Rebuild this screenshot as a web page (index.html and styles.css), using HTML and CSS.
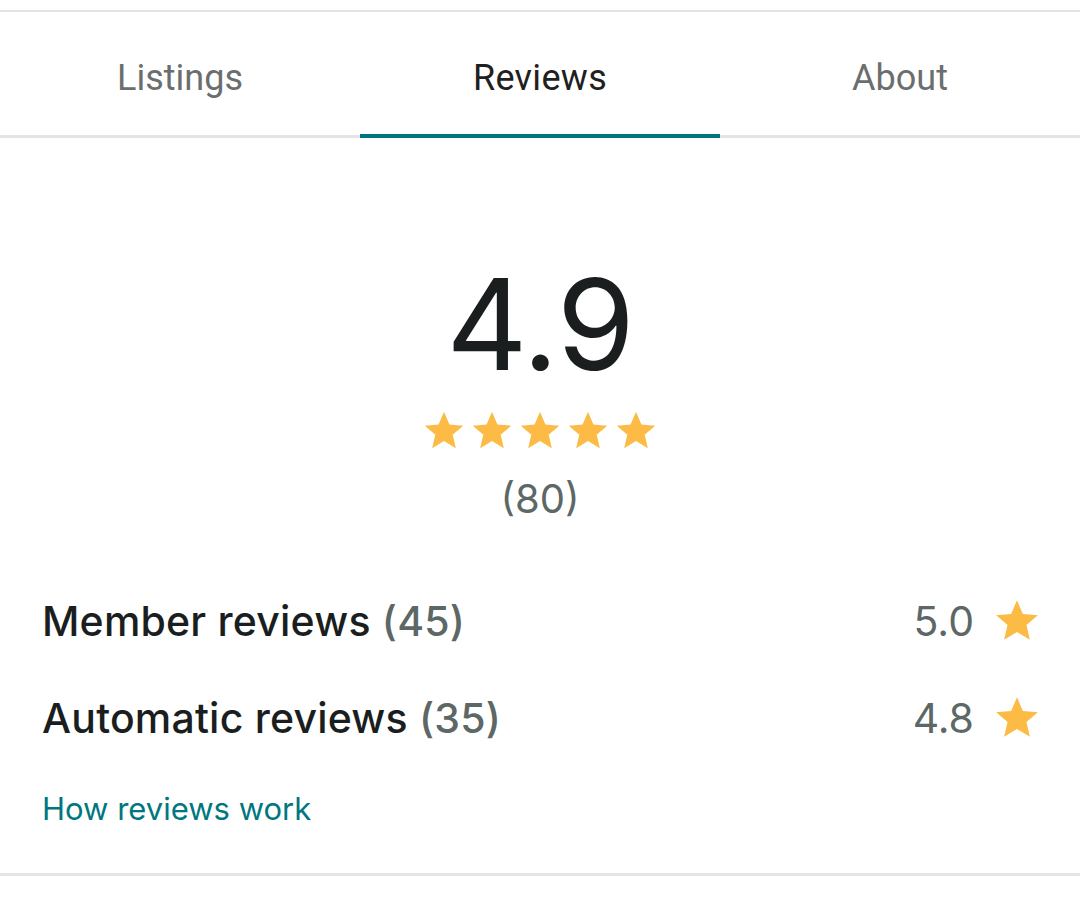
FILE: index.html
```html
<!DOCTYPE html>
<html lang="en">
<head>
  <meta charset="UTF-8" />
  <meta name="viewport" content="width=device-width, initial-scale=1.0" />
  <title>Reviews</title>
  <link rel="stylesheet" href="styles.css">
</head>
<body>
  <div class="page">
    <nav class="tabs">
      <div class="tab">Listings</div>
      <div class="tab active">Reviews</div>
      <div class="tab">About</div>
    </nav>

    <div class="summary">
      <div class="score">4.9</div>
      <div class="stars">
        <svg class="star" viewBox="0 0 24 24"><path d="M12 17.27L18.18 21l-1.64-7.03L22 9.24l-7.19-.61L12 2 9.19 8.63 2 9.24l5.46 4.73L5.82 21z"/></svg>
        <svg class="star" viewBox="0 0 24 24"><path d="M12 17.27L18.18 21l-1.64-7.03L22 9.24l-7.19-.61L12 2 9.19 8.63 2 9.24l5.46 4.73L5.82 21z"/></svg>
        <svg class="star" viewBox="0 0 24 24"><path d="M12 17.27L18.18 21l-1.64-7.03L22 9.24l-7.19-.61L12 2 9.19 8.63 2 9.24l5.46 4.73L5.82 21z"/></svg>
        <svg class="star" viewBox="0 0 24 24"><path d="M12 17.27L18.18 21l-1.64-7.03L22 9.24l-7.19-.61L12 2 9.19 8.63 2 9.24l5.46 4.73L5.82 21z"/></svg>
        <svg class="star" viewBox="0 0 24 24"><path d="M12 17.27L18.18 21l-1.64-7.03L22 9.24l-7.19-.61L12 2 9.19 8.63 2 9.24l5.46 4.73L5.82 21z"/></svg>
      </div>
      <div class="count">(80)</div>
    </div>

    <div class="breakdown">
      <div class="row">
        <span class="label">Member reviews <span class="muted">(45)</span></span>
        <span class="value">5.0
          <svg class="star-sm" viewBox="0 0 24 24"><path d="M12 17.27L18.18 21l-1.64-7.03L22 9.24l-7.19-.61L12 2 9.19 8.63 2 9.24l5.46 4.73L5.82 21z"/></svg>
        </span>
      </div>
      <div class="row">
        <span class="label">Automatic reviews <span class="muted">(35)</span></span>
        <span class="value">4.8
          <svg class="star-sm" viewBox="0 0 24 24"><path d="M12 17.27L18.18 21l-1.64-7.03L22 9.24l-7.19-.61L12 2 9.19 8.63 2 9.24l5.46 4.73L5.82 21z"/></svg>
        </span>
      </div>
      <a class="how" href="#">How reviews work</a>
    </div>
  </div>
</body>
</html>
```

FILE: styles.css
```css
body {
  margin: 0;
  background: #fff;
  font-family: Inter, "Noto Sans", sans-serif;
  color: #1b1e1e;
}
.page {
  padding-top: 10px;
}
.tabs {
  display: flex;
  border-top: 2px solid #e4e4e4;
}
.tab {
  flex: 1;
  box-sizing: border-box;
  height: 126px;
  padding-top: 8px;
  display: flex;
  align-items: center;
  justify-content: center;
  font-family: Roboto, "Liberation Sans", sans-serif;
  font-size: 36px;
  color: #6b6e6e;
  border-bottom: 3px solid #e4e4e4;
}
.tab.active {
  color: #1f2121;
  border-bottom: 4px solid #00737b;
  padding-top: 10px;
  letter-spacing: 0.3px;
}
.summary {
  display: flex;
  flex-direction: column;
  align-items: center;
  padding-top: 122px;
}
.score {
  font-size: 126px;
  line-height: 128px;
  letter-spacing: -1px;
  color: #1b1e1e;
}
.stars {
  display: flex;
  gap: 2px;
  margin-top: 20px;
}
.star {
  width: 46px;
  height: 46px;
  fill: #fbbb44;
}
.count {
  margin-top: 20px;
  font-size: 40px;
  color: #5d6766;
}
.breakdown {
  padding: 73px 38px 46px 42px;
  border-bottom: 3px solid #e4e4e4;
}
.row {
  display: flex;
  align-items: center;
  justify-content: space-between;
  margin-bottom: 47px;
}
.label {
  font-size: 41px;
  font-weight: 500;
  letter-spacing: 0.2px;
}
.muted {
  color: #5d6766;
}
.value {
  display: flex;
  align-items: center;
  gap: 18px;
  font-size: 41px;
  color: #5d6766;
}
.star-sm {
  width: 50px;
  height: 50px;
  fill: #fbbb44;
}
.how {
  display: block;
  font-size: 31px;
  color: #00777f;
  text-decoration: none;
}
```
